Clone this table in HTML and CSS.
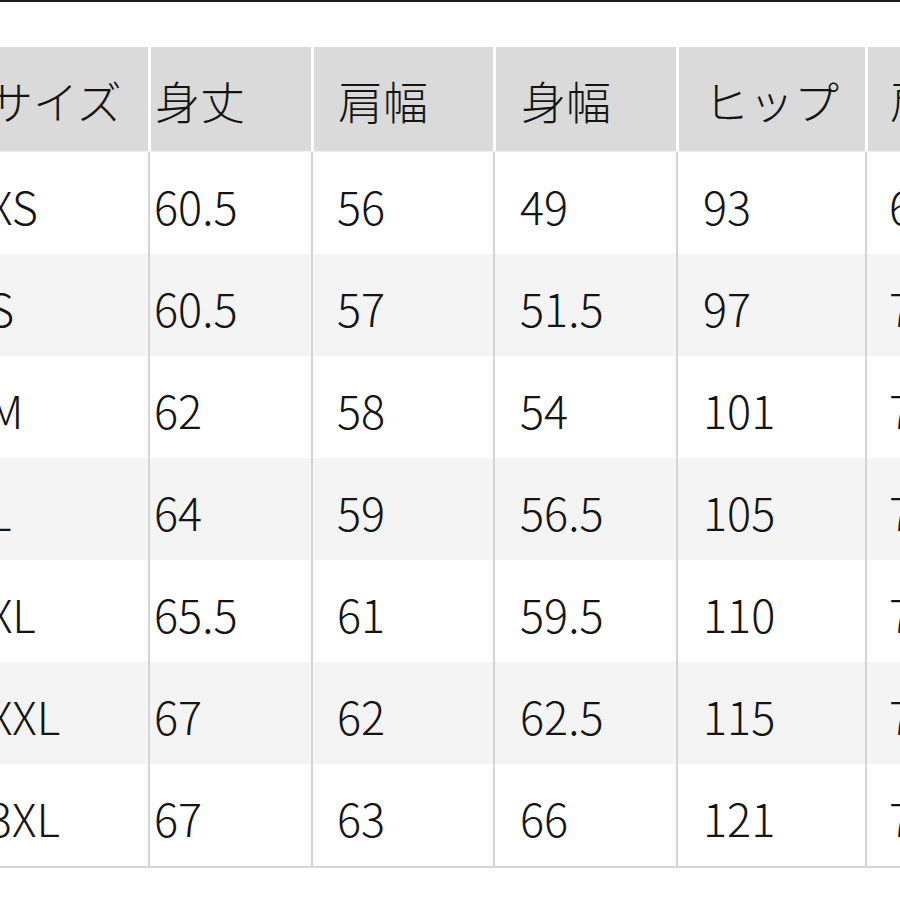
FILE: index.html
```html
<!DOCTYPE html>
<html lang="ja">
<head>
<meta charset="utf-8">
<link rel="stylesheet" href="styles.css">
</head>
<body>
<div class="topline"></div>
<div class="table">
  <div class="row head">
    <div class="c c1">サイズ</div><div class="c c2">身丈</div><div class="c c3">肩幅</div><div class="c c4">身幅</div><div class="c c5">ヒップ</div><div class="c c6">肩袖</div>
  </div>
  <div class="row">
    <div class="c c1">XS</div><div class="c c2">60.5</div><div class="c c3">56</div><div class="c c4">49</div><div class="c c5">93</div><div class="c c6">69</div>
  </div>
  <div class="row alt">
    <div class="c c1">S</div><div class="c c2">60.5</div><div class="c c3">57</div><div class="c c4">51.5</div><div class="c c5">97</div><div class="c c6">71</div>
  </div>
  <div class="row">
    <div class="c c1">M</div><div class="c c2">62</div><div class="c c3">58</div><div class="c c4">54</div><div class="c c5">101</div><div class="c c6">73</div>
  </div>
  <div class="row alt">
    <div class="c c1">L</div><div class="c c2">64</div><div class="c c3">59</div><div class="c c4">56.5</div><div class="c c5">105</div><div class="c c6">75</div>
  </div>
  <div class="row">
    <div class="c c1">XL</div><div class="c c2">65.5</div><div class="c c3">61</div><div class="c c4">59.5</div><div class="c c5">110</div><div class="c c6">77</div>
  </div>
  <div class="row alt">
    <div class="c c1">XXL</div><div class="c c2">67</div><div class="c c3">62</div><div class="c c4">62.5</div><div class="c c5">115</div><div class="c c6">79</div>
  </div>
  <div class="row last">
    <div class="c c1">3XL</div><div class="c c2">67</div><div class="c c3">63</div><div class="c c4">66</div><div class="c c5">121</div><div class="c c6">79</div>
  </div>
</div>
</body>
</html>
```
FILE: styles.css
```css
html, body {
  margin: 0;
  padding: 0;
  background: #ffffff;
  overflow: hidden;
}
body {
  width: 900px;
  height: 900px;
  font-family: "Noto Sans CJK JP", "Noto Sans", sans-serif;
  font-weight: 300;
  color: #141414;
}
.topline {
  height: 2px;
  background: #1e1e1e;
}
.table {
  margin-top: 45px;
  margin-left: -25px;
  width: 990px;
  border-bottom: 2px solid #d6d6d6;
}
.row {
  display: grid;
  grid-template-columns: 173px 163px 182px 183px 189px 100px;
  height: 102px;
  background: #ffffff;
}
.row.alt {
  background: #f4f4f4;
}
.row.head {
  height: 104px;
  background: #dadada;
  border-bottom: 1px solid #f2f2f2;
}
.c {
  box-sizing: border-box;
  display: flex;
  align-items: center;
  padding-top: 4px;
  font-size: 45px;
  line-height: 1;
  white-space: nowrap;
  overflow: hidden;
  border-left: 2px solid #d4d4d4;
}
.head .c {
  border-left: 3px solid #ffffff;
  padding-top: 3px;
}
.c1 { padding-left: 13px; border-left: none !important; }
.c2 { padding-left: 4px; }
.c3 { padding-left: 24px; }
.c4 { padding-left: 25px; }
.c5 { padding-left: 25px; }
.c6 { padding-left: 22px; }
.head .c5 { padding-left: 25px; }
```
